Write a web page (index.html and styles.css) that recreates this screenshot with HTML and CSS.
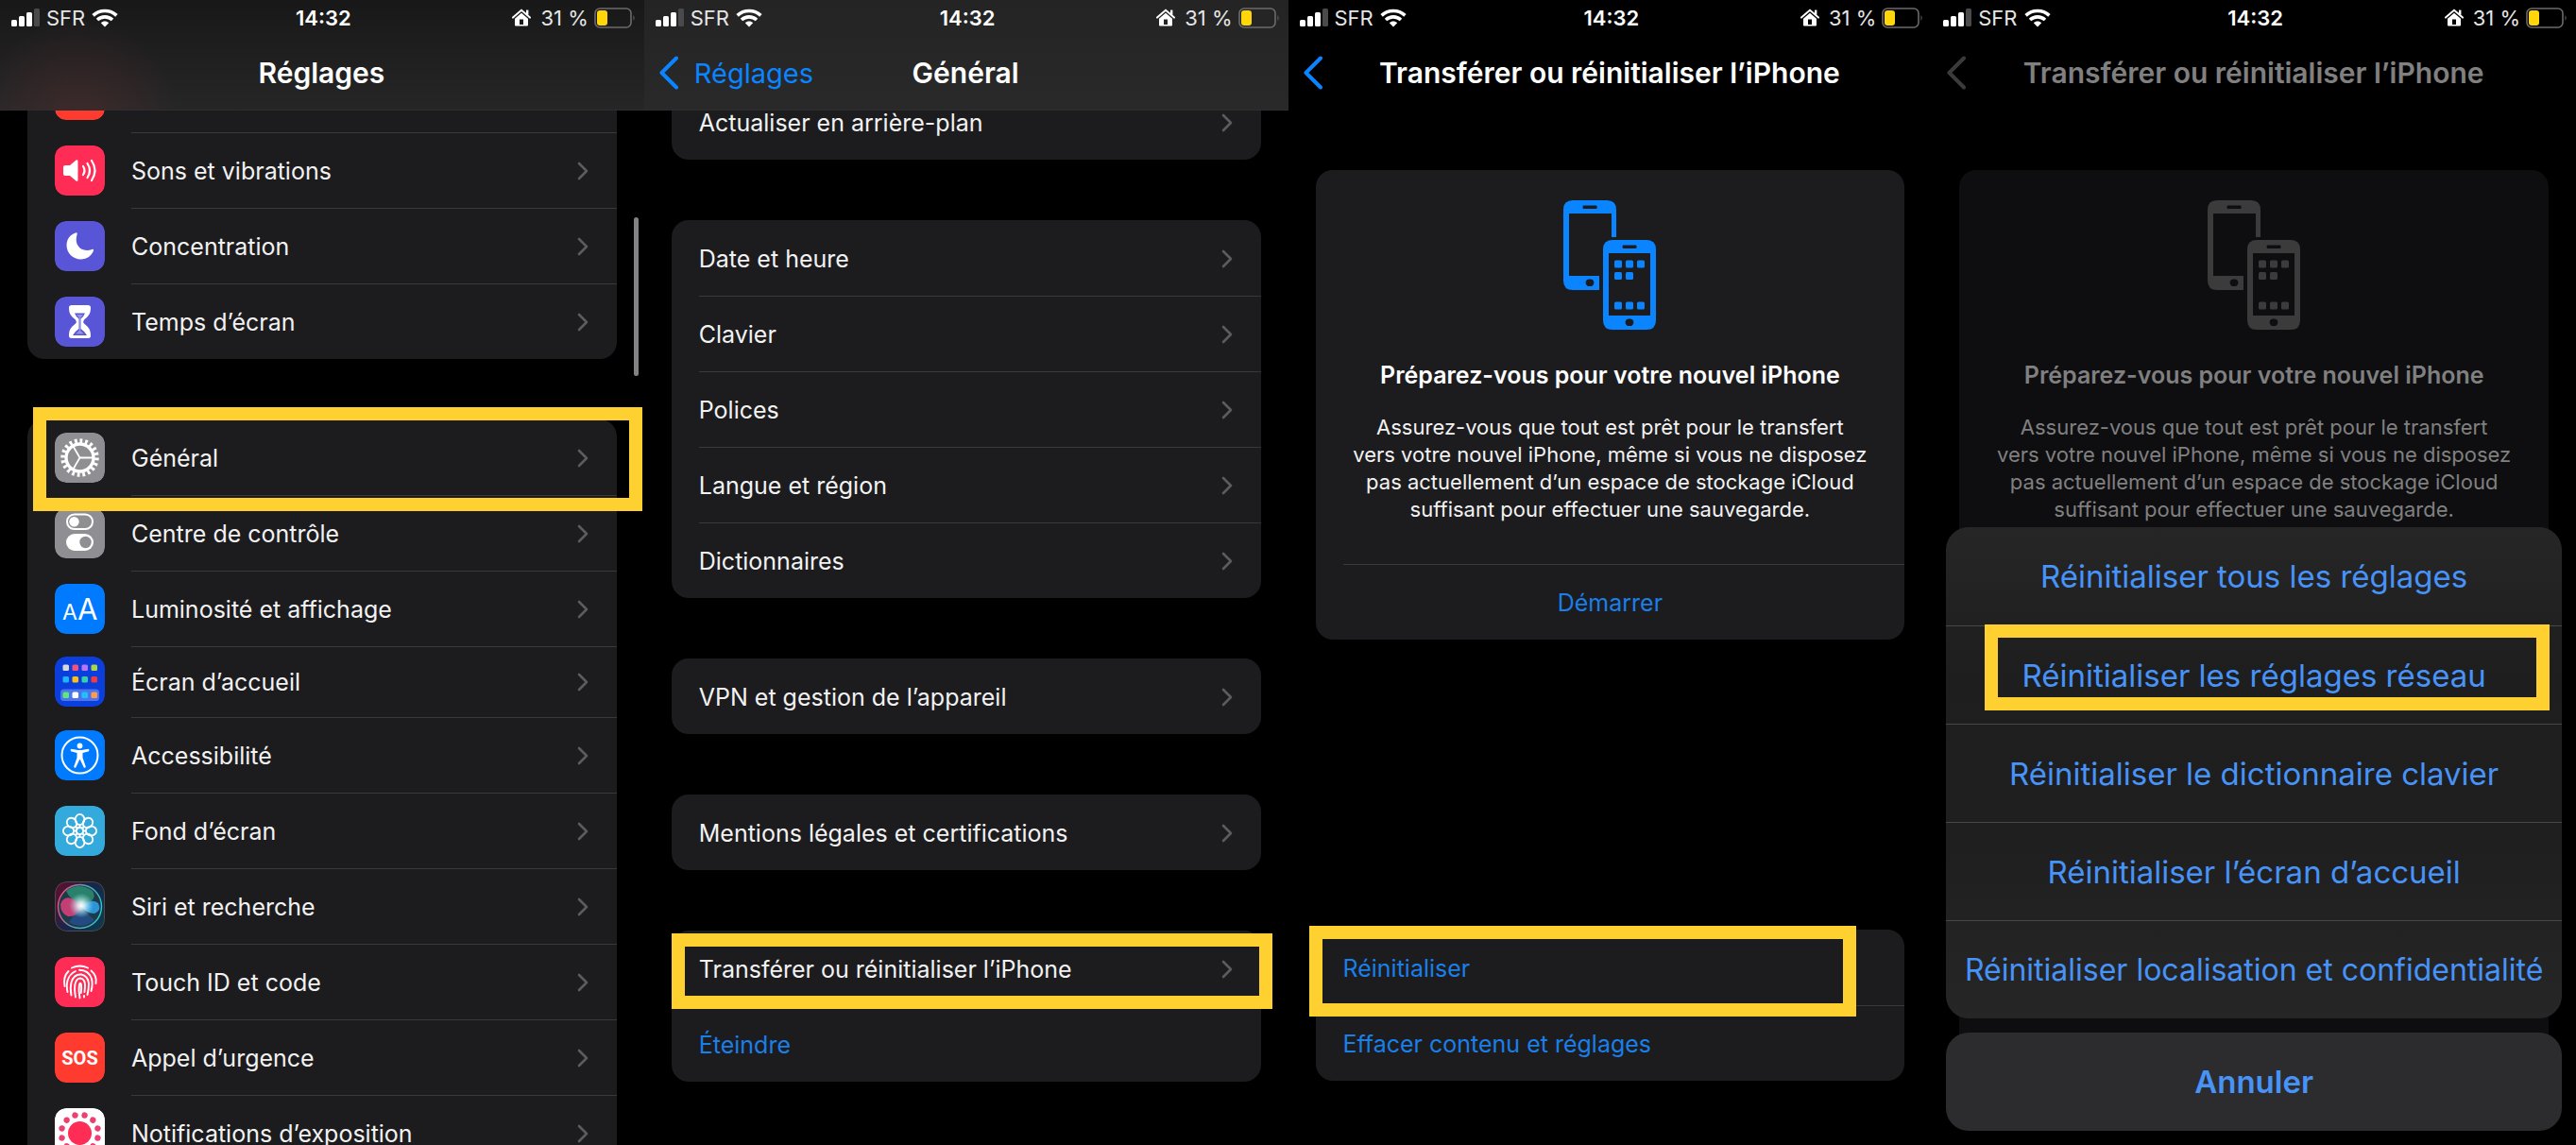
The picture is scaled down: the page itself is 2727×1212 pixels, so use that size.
FILE: index.html
```html
<!DOCTYPE html>
<html lang="fr">
<head>
    <meta charset="UTF-8">
    <meta name="viewport" content="width=device-width, initial-scale=1.0">
    <title>Réglages</title>
    <link rel="stylesheet" href="styles.css">
</head>
<body>
    <!-- shared icons -->
    <svg class="defs" width="0" height="0" aria-hidden="true">
        <symbol id="signal" viewBox="0 0 30 20">
            <g fill="#fff">
                <rect x="0" y="12" width="6" height="7" rx="1.5"/>
                <rect x="8" y="8" width="6" height="11" rx="1.5"/>
                <rect x="16" y="4" width="6" height="15" rx="1.5"/>
            </g>
            <rect x="24" y="0" width="6" height="19" rx="1.5" fill="#4a4a4c"/>
        </symbol>
        <symbol id="wifi" viewBox="0 0 28 20">
            <g fill="none" stroke="#fff" stroke-width="3.6">
                <path d="M1.6 7.4C8.6 .8 19.4 .8 26.4 7.4"/>
                <path d="M6 12C10.6 7.8 17.4 7.8 22 12"/>
            </g>
            <path d="M9.8 15.2C12.2 13 15.8 13 18.2 15.2L14 19.6Z" fill="#fff"/>
        </symbol>
        <symbol id="home" viewBox="0 0 20 19">
            <path d="M1 9.6L10 1.8L19 9.6" fill="none" stroke="#fff" stroke-width="2" stroke-linecap="round"/>
            <path d="M15 1.6h2.4v5h-2.4z" fill="#fff"/>
            <path d="M10 4.8L17 10.8V17.6Q17 18.6 16 18.6H4Q3 18.6 3 17.6V10.8ZM8 11.6V17H12V11.6Z" fill="#fff" fill-rule="evenodd"/>
        </symbol>
        <symbol id="battery" viewBox="0 0 44 22">
            <rect x="1" y="1" width="38" height="20" rx="5" fill="none" stroke="#6b6b6d" stroke-width="1.6"/>
            <path d="M41.5 8Q43.6 11 41.5 14Z" fill="#6b6b6d"/>
            <rect x="3" y="3" width="11" height="16" rx="3" fill="#ffd60a"/>
        </symbol>
        <symbol id="chevron" viewBox="0 0 12 20">
            <path d="M2 2L10 10L2 18" fill="none" stroke="#5b5b60" stroke-width="2.6" stroke-linecap="round" stroke-linejoin="round"/>
        </symbol>
        <symbol id="back" viewBox="0 0 22 36">
            <path d="M19 2.5L3.5 18L19 33.5" fill="none" stroke="currentColor" stroke-width="4" stroke-linecap="round" stroke-linejoin="round"/>
        </symbol>
        <symbol id="phones" viewBox="0 0 99 137">
            <g fill="currentColor" fill-rule="evenodd">
                <path d="M10 0H46Q56 0 56 10V39H51V14H6V80H38V95H10Q0 95 0 85V10Q0 0 10 0ZM21 5.5Q20 7.5 21 9H35Q36.5 7.5 35 5.5ZM28 83.5A3.8 3.8 0 1 0 28 91A3.8 3.8 0 1 0 28 83.5Z"/>
                <path d="M52 42H88Q98 42 98 52V127Q98 137 88 137H52Q42 137 42 127V52Q42 42 52 42ZM48 56V122H92V56ZM63 47.5Q62 49 63 51H77Q78.5 49 77 47.5ZM70 125.5A3.8 3.8 0 1 0 70 133A3.8 3.8 0 1 0 70 125.5Z"/>
                <rect x="54" y="63.5" width="8" height="8" rx="1.5"/>
                <rect x="66" y="63.5" width="8" height="8" rx="1.5"/>
                <rect x="78" y="63.5" width="8" height="8" rx="1.5"/>
                <rect x="54" y="76" width="8" height="8" rx="1.5"/>
                <rect x="66" y="76" width="8" height="8" rx="1.5"/>
                <rect x="54" y="107.5" width="8" height="8" rx="1.5"/>
                <rect x="66" y="107.5" width="8" height="8" rx="1.5"/>
                <rect x="78" y="107.5" width="8" height="8" rx="1.5"/>
            </g>
        </symbol>
    </svg>

    <main class="screens">

        <!-- 1. Réglages -->
        <section class="screen">
            <header class="bar bar-glow">
                <div class="status">
                    <div class="status-left"><svg class="i-signal"><use href="#signal"/></svg>SFR<svg class="i-wifi"><use href="#wifi"/></svg></div>
                    <time class="clock">14:32</time>
                    <div class="status-right"><svg class="i-home"><use href="#home"/></svg>31 %<svg class="i-battery"><use href="#battery"/></svg></div>
                </div>
                <div class="nav"><h1>Réglages</h1></div>
            </header>
            <div class="scroll from-icons">
                <nav class="card">
                    <a class="row" href="#notifications" aria-label="Notifications">
                        <svg class="icon" viewBox="0 0 53 53"><rect width="53" height="53" rx="12" fill="#ff3b30"/></svg>
                        <span class="body"></span>
                    </a>
                    <a class="row" href="#sons">
                        <svg class="icon" viewBox="0 0 53 53">
                            <rect width="53" height="53" rx="12" fill="#ff2d55"/>
                            <path d="M9 23Q9 21 11 21H16L22.5 15.5Q24.5 14.5 24.5 16.5V36.5Q24.5 38.5 22.5 37.5L16 32H11Q9 32 9 30Z" fill="#fff"/>
                            <g fill="none" stroke="#fff" stroke-width="2.2" stroke-linecap="round">
                                <path d="M30 22Q33 26.5 30 31"/><path d="M34.5 19Q39.5 26.5 34.5 34"/><path d="M39 16Q46 26.5 39 37"/>
                            </g>
                        </svg>
                        <span class="body">Sons et vibrations<svg class="chevron"><use href="#chevron"/></svg></span>
                    </a>
                    <a class="row" href="#concentration">
                        <svg class="icon" viewBox="0 0 53 53">
                            <rect width="53" height="53" rx="12" fill="#5856d6"/>
                            <path d="M22 12.5C15 15 12.5 20.5 12.5 25.5C12.5 34 19.5 40.5 27.5 40.5C34 40.5 39 36.5 41 31.2C41.4 29.9 40.4 29.5 39.4 30C30.5 33.5 19.5 27.5 23.6 14C24 12.7 23.3 12 22 12.5Z" fill="#fff"/>
                        </svg>
                        <span class="body">Concentration<svg class="chevron"><use href="#chevron"/></svg></span>
                    </a>
                    <a class="row" href="#temps">
                        <svg class="icon" viewBox="0 0 53 53">
                            <rect width="53" height="53" rx="12" fill="#5856d6"/>
                            <path d="M18 9H35Q38 9 38 11.5C38 18 36 20.5 31 24.5Q29.5 26.5 31 28.5C36 32.5 38 35 38 41.5Q38 44 35 44H18Q15 44 15 41.5C15 35 17 32.5 22 28.5Q23.5 26.5 22 24.5C17 20.5 15 18 15 11.5Q15 9 18 9Z" fill="#fff"/>
                            <path d="M21 17.5H32Q31 20.5 27.5 23.5V34Q32 37 34 41H19Q21 37 25.5 34V23.5Q22 20.5 21 17.5Z" fill="#5856d6"/>
                            <path d="M23 19H30L27.2 22.5V36L31 39.5H22L25.8 36V22.5Z" fill="#fff" opacity=".35"/>
                        </svg>
                        <span class="body">Temps d’écran<svg class="chevron"><use href="#chevron"/></svg></span>
                    </a>
                </nav>
                <nav class="card">
                    <a class="row" href="#general">
                        <svg class="icon" viewBox="0 0 53 53">
                            <rect width="53" height="53" rx="12" fill="#8e8e93"/>
                            <g fill="none" stroke="#fff">
                                <circle cx="26.5" cy="26.5" r="18" stroke-width="4.5" pathLength="40" stroke-dasharray="1 1"/>
                                <circle cx="26.5" cy="26.5" r="14.5" stroke-width="3.4"/>
                                <path d="M26.5 26.5H40M26.5 26.5L19.5 14.5M26.5 26.5L19.5 38.5" stroke-width="1.8"/>
                            </g>
                        </svg>
                        <span class="body">Général<svg class="chevron"><use href="#chevron"/></svg></span>
                        <span class="highlight hl-general"></span>
                    </a>
                    <a class="row" href="#controle">
                        <svg class="icon" viewBox="0 0 53 53">
                            <rect width="53" height="53" rx="12" fill="#8e8e93"/>
                            <rect x="13" y="6.5" width="27" height="15.5" rx="7.7" fill="none" stroke="#fff" stroke-width="2"/>
                            <circle cx="20.5" cy="14.3" r="5.2" fill="#fff"/>
                            <rect x="12" y="27" width="29" height="18" rx="9" fill="#fff"/>
                            <circle cx="32.5" cy="36" r="6.2" fill="#8e8e93"/>
                        </svg>
                        <span class="body">Centre de contrôle<svg class="chevron"><use href="#chevron"/></svg></span>
                    </a>
                    <a class="row" href="#luminosite">
                        <svg class="icon" viewBox="0 0 53 53">
                            <rect width="53" height="53" rx="12" fill="#007aff"/>
                            <text x="8" y="38" font-size="23" fill="#fff">A</text>
                            <text x="24" y="38" font-size="31" fill="#fff">A</text>
                        </svg>
                        <span class="body">Luminosité et affichage<svg class="chevron"><use href="#chevron"/></svg></span>
                    </a>
                    <a class="row row-short" href="#accueil">
                        <svg class="icon" viewBox="0 0 53 53">
                            <rect width="53" height="53" rx="12" fill="#0a3fdc"/>
                            <rect x="6" y="34.5" width="41" height="12.5" rx="3.5" fill="#4d74ec"/>
                            <rect x="8.5" y="8.5" width="6.5" height="6.5" rx="1.5" fill="#d8d8dc"/>
                            <rect x="18.5" y="8.5" width="6.5" height="6.5" rx="1.5" fill="#f5517a"/>
                            <rect x="28.5" y="8.5" width="6.5" height="6.5" rx="1.5" fill="#b874fa"/>
                            <rect x="38.5" y="8.5" width="6.5" height="6.5" rx="1.5" fill="#a8d648"/>
                            <rect x="8.5" y="21" width="6.5" height="6.5" rx="1.5" fill="#1fb4ff"/>
                            <rect x="18.5" y="21" width="6.5" height="6.5" rx="1.5" fill="#fcbf14"/>
                            <rect x="28.5" y="21" width="6.5" height="6.5" rx="1.5" fill="#36cfa8"/>
                            <rect x="38.5" y="21" width="6.5" height="6.5" rx="1.5" fill="#f23a3f"/>
                            <rect x="8.5" y="37.5" width="6.5" height="6.5" rx="1.5" fill="#5bea78"/>
                            <rect x="18.5" y="37.5" width="6.5" height="6.5" rx="1.5" fill="#fff"/>
                            <rect x="28.5" y="37.5" width="6.5" height="6.5" rx="1.5" fill="#1cc3fb"/>
                            <rect x="38.5" y="37.5" width="6.5" height="6.5" rx="1.5" fill="#ff9c4a"/>
                        </svg>
                        <span class="body">Écran d’accueil<svg class="chevron"><use href="#chevron"/></svg></span>
                    </a>
                    <a class="row" href="#accessibilite">
                        <svg class="icon" viewBox="0 0 53 53">
                            <rect width="53" height="53" rx="12" fill="#007aff"/>
                            <circle cx="26.5" cy="26.5" r="19" fill="none" stroke="#fff" stroke-width="2"/>
                            <circle cx="26.5" cy="16.5" r="2.9" fill="#fff"/>
                            <path d="M17.5 19.8L24.5 21H28.5L35.5 19.8Q37.2 20.7 36 22.2L29.5 24V29L32.8 38.5Q32.3 40.3 30.8 39.4L26.5 30.5L22.2 39.4Q20.7 40.3 20.2 38.5L23.5 29V24L17 22.2Q15.8 20.7 17.5 19.8Z" fill="#fff"/>
                        </svg>
                        <span class="body">Accessibilité<svg class="chevron"><use href="#chevron"/></svg></span>
                    </a>
                    <a class="row" href="#fond">
                        <svg class="icon" viewBox="0 0 53 53">
                            <rect width="53" height="53" rx="12" fill="#34aadc"/>
                            <g fill="none" stroke="#fff" stroke-width="1.8">
                                <g id="petals">
                                    <ellipse cx="26.5" cy="14.5" rx="4.9" ry="5.6"/>
                                    <ellipse cx="26.5" cy="38.5" rx="4.9" ry="5.6"/>
                                    <ellipse cx="14.5" cy="26.5" rx="5.6" ry="4.9"/>
                                    <ellipse cx="38.5" cy="26.5" rx="5.6" ry="4.9"/>
                                </g>
                                <use href="#petals" transform="rotate(45 26.5 26.5)"/>
                                <circle cx="26.5" cy="26.5" r="3.8"/>
                                <path d="M26.5 20V33M20 26.5H33M22 22L31 31M31 22L22 31"/>
                            </g>
                            <circle cx="26.5" cy="26.5" r="2.6" fill="#34aadc"/>
                        </svg>
                        <span class="body">Fond d’écran<svg class="chevron"><use href="#chevron"/></svg></span>
                    </a>
                    <a class="row" href="#siri">
                        <svg class="icon" viewBox="0 0 53 53">
                            <defs>
                                <linearGradient id="siri-bg" x1="0" y1=".2" x2="1" y2=".8">
                                    <stop offset="0" stop-color="#5a1030"/><stop offset=".5" stop-color="#15264a"/><stop offset="1" stop-color="#0c3a4c"/>
                                </linearGradient>
                                <linearGradient id="siri-ring" x1="0" y1=".3" x2="1" y2=".6">
                                    <stop offset="0" stop-color="#f0507c"/><stop offset=".5" stop-color="#5f9fb0"/><stop offset="1" stop-color="#35c8d8"/>
                                </linearGradient>
                                <radialGradient id="siri-light">
                                    <stop offset="0" stop-color="#fff"/><stop offset=".3" stop-color="#e8fbff" stop-opacity=".8"/><stop offset="1" stop-color="#8fe8e8" stop-opacity="0"/>
                                </radialGradient>
                            </defs>
                            <rect x=".5" y=".5" width="52" height="52" rx="12" fill="url(#siri-bg)" stroke="#4a4a50"/>
                            <circle cx="26.5" cy="26.5" r="23" fill="#1c3a48"/>
                            <path d="M12 10Q26 0 40 10Q46 20 30 25Q16 20 12 10Z" fill="#2d9a78" opacity=".75"/>
                            <path d="M6 24Q10 14 20 19L30 27Q24 38 14 37Q6 34 6 24Z" fill="#e0407c" opacity=".85"/>
                            <path d="M28 27Q38 17 46 23Q50 31 42 34Q34 34 28 27Z" fill="#2f9fe8" opacity=".9"/>
                            <path d="M15 43L27 27L42 41Q28 52 15 43Z" fill="#2a56a8" opacity=".6"/>
                            <circle cx="26.5" cy="26.5" r="23" fill="none" stroke="url(#siri-ring)" stroke-width="1.4"/>
                            <circle cx="28" cy="25.5" r="13" fill="url(#siri-light)"/>
                        </svg>
                        <span class="body">Siri et recherche<svg class="chevron"><use href="#chevron"/></svg></span>
                    </a>
                    <a class="row" href="#touchid">
                        <svg class="icon" viewBox="0 0 53 53">
                            <rect width="53" height="53" rx="12" fill="#ff2d55"/>
                            <g fill="none" stroke="#fff" stroke-width="1.9" stroke-linecap="round">
                                <path d="M18 11.5Q26.5 7.5 35 11.5"/>
                                <path d="M10.5 31Q8.5 21 14.5 15"/>
                                <path d="M38.5 14.5Q45 20 43.5 28"/>
                                <path d="M13.5 37Q12 30 13.5 25Q15.5 18 22 15"/>
                                <path d="M26 13.8Q36 14 39 23Q40.5 29 38.5 36"/>
                                <path d="M17.5 40.5Q16 33 17.5 27Q20 18 28 18.5Q35 20 36 28Q36 34 34.5 40"/>
                                <path d="M22 42.5Q20.5 34 21.5 28.5Q23 22.5 27 22.5Q31.5 23 32 29Q32 33 31.5 37"/>
                                <path d="M26.5 43.5Q25 35 26 29Q27 26.5 28 29Q28.5 33 27.8 38"/>
                                <path d="M31 41V42.5"/>
                            </g>
                        </svg>
                        <span class="body">Touch ID et code<svg class="chevron"><use href="#chevron"/></svg></span>
                    </a>
                    <a class="row" href="#urgence">
                        <svg class="icon" viewBox="0 0 53 53">
                            <rect width="53" height="53" rx="12" fill="#ff3b30"/>
                            <text class="sos" x="26.5" y="34" text-anchor="middle" fill="#fff">SOS</text>
                        </svg>
                        <span class="body">Appel d’urgence<svg class="chevron"><use href="#chevron"/></svg></span>
                    </a>
                    <a class="row" href="#exposition">
                        <svg class="icon" viewBox="0 0 53 53">
                            <rect width="53" height="53" rx="12" fill="#fff"/>
                            <circle cx="26.5" cy="26.5" r="12.5" fill="#ff2d55"/>
                            <circle cx="26.5" cy="26.5" r="19.6" fill="none" stroke="#ee3f72" stroke-width="6.4" stroke-linecap="round" pathLength="12" stroke-dasharray="0 1" transform="rotate(15 26.5 26.5)"/>
                        </svg>
                        <span class="body">Notifications d’exposition<svg class="chevron"><use href="#chevron"/></svg></span>
                    </a>
                </nav>
            </div>
            <div class="scrollbar"></div>
        </section>

        <!-- 2. Général -->
        <section class="screen">
            <header class="bar bar-grey">
                <div class="status">
                    <div class="status-left"><svg class="i-signal"><use href="#signal"/></svg>SFR<svg class="i-wifi"><use href="#wifi"/></svg></div>
                    <time class="clock">14:32</time>
                    <div class="status-right"><svg class="i-home"><use href="#home"/></svg>31 %<svg class="i-battery"><use href="#battery"/></svg></div>
                </div>
                <div class="nav">
                    <a class="back" href="#reglages"><svg class="i-back"><use href="#back"/></svg>Réglages</a>
                    <h1>Général</h1>
                </div>
            </header>
            <div class="scroll from-text">
                <nav class="card">
                    <a class="row" href="#arriere-plan"><span class="body">Actualiser en arrière-plan<svg class="chevron"><use href="#chevron"/></svg></span></a>
                </nav>
                <nav class="card">
                    <a class="row" href="#date"><span class="body">Date et heure<svg class="chevron"><use href="#chevron"/></svg></span></a>
                    <a class="row" href="#clavier"><span class="body">Clavier<svg class="chevron"><use href="#chevron"/></svg></span></a>
                    <a class="row" href="#polices"><span class="body">Polices<svg class="chevron"><use href="#chevron"/></svg></span></a>
                    <a class="row" href="#langue"><span class="body">Langue et région<svg class="chevron"><use href="#chevron"/></svg></span></a>
                    <a class="row" href="#dictionnaires"><span class="body">Dictionnaires<svg class="chevron"><use href="#chevron"/></svg></span></a>
                </nav>
                <nav class="card">
                    <a class="row" href="#vpn"><span class="body">VPN et gestion de l’appareil<svg class="chevron"><use href="#chevron"/></svg></span></a>
                </nav>
                <nav class="card">
                    <a class="row" href="#mentions"><span class="body">Mentions légales et certifications<svg class="chevron"><use href="#chevron"/></svg></span></a>
                </nav>
                <nav class="card">
                    <a class="row" href="#transferer">
                        <span class="body">Transférer ou réinitialiser l’iPhone<svg class="chevron"><use href="#chevron"/></svg></span>
                        <span class="highlight hl-transfer"></span>
                    </a>
                    <button class="row link" type="button"><span class="body">Éteindre</span></button>
                </nav>
            </div>
        </section>

        <!-- 3. Transférer ou réinitialiser -->
        <section class="screen">
            <header class="bar">
                <div class="status">
                    <div class="status-left"><svg class="i-signal"><use href="#signal"/></svg>SFR<svg class="i-wifi"><use href="#wifi"/></svg></div>
                    <time class="clock">14:32</time>
                    <div class="status-right"><svg class="i-home"><use href="#home"/></svg>31 %<svg class="i-battery"><use href="#battery"/></svg></div>
                </div>
                <div class="nav">
                    <a class="back" href="#general" aria-label="Général"><svg class="i-back"><use href="#back"/></svg></a>
                    <h1>Transférer ou réinitialiser l’iPhone</h1>
                </div>
            </header>
            <div class="scroll split">
                <div class="card intro">
                    <svg class="phones"><use href="#phones"/></svg>
                    <h2>Préparez-vous pour votre nouvel iPhone</h2>
                    <p>Assurez-vous que tout est prêt pour le transfert<br>vers votre nouvel iPhone, même si vous ne disposez<br>pas actuellement d’un espace de stockage iCloud<br>suffisant pour effectuer une sauvegarde.</p>
                    <button class="row link start" type="button"><span class="body">Démarrer</span></button>
                </div>
                <div class="card">
                    <button class="row link" type="button">
                        <span class="body">Réinitialiser</span>
                        <span class="highlight hl-reset"></span>
                    </button>
                    <button class="row link" type="button"><span class="body">Effacer contenu et réglages</span></button>
                </div>
            </div>
        </section>

        <!-- 4. Feuille d'actions -->
        <section class="screen dimmed">
            <header class="bar">
                <div class="status">
                    <div class="status-left"><svg class="i-signal"><use href="#signal"/></svg>SFR<svg class="i-wifi"><use href="#wifi"/></svg></div>
                    <time class="clock">14:32</time>
                    <div class="status-right"><svg class="i-home"><use href="#home"/></svg>31 %<svg class="i-battery"><use href="#battery"/></svg></div>
                </div>
                <div class="nav">
                    <a class="back" href="#general" aria-label="Général"><svg class="i-back"><use href="#back"/></svg></a>
                    <h1>Transférer ou réinitialiser l’iPhone</h1>
                </div>
            </header>
            <div class="scroll split">
                <div class="card intro">
                    <svg class="phones"><use href="#phones"/></svg>
                    <h2>Préparez-vous pour votre nouvel iPhone</h2>
                    <p>Assurez-vous que tout est prêt pour le transfert<br>vers votre nouvel iPhone, même si vous ne disposez<br>pas actuellement d’un espace de stockage iCloud<br>suffisant pour effectuer une sauvegarde.</p>
                    <div class="row"></div>
                </div>
                <div class="card">
                    <div class="row"></div>
                    <div class="row"></div>
                </div>
            </div>
            <div class="sheet" role="dialog" aria-label="Réinitialiser">
                <div class="actions">
                    <button class="action" type="button">Réinitialiser tous les réglages</button>
                    <button class="action" type="button">Réinitialiser les réglages réseau<span class="highlight hl-network"></span></button>
                    <button class="action" type="button">Réinitialiser le dictionnaire clavier</button>
                    <button class="action" type="button">Réinitialiser l’écran d’accueil</button>
                    <button class="action action-long" type="button">Réinitialiser localisation et confidentialité</button>
                </div>
                <button class="action cancel" type="button">Annuler</button>
            </div>
        </section>
    </main>
</body>
</html>
```
FILE: styles.css
```css
* {
    box-sizing: border-box;
}
body {
    margin: 0;
    background: #000;
    color: #f2f2f3;
    font-family: Inter, "Liberation Sans", sans-serif;
    font-size: 25px;
}
h1, h2, p {
    margin: 0;
}
a {
    color: inherit;
    text-decoration: none;
}
button {
    border: none;
    background: none;
    padding: 0;
    font: inherit;
    color: inherit;
    text-align: left;
    cursor: pointer;
}
svg {
    display: block;
    flex: none;
}
.defs {
    position: absolute;
}
.screens {
    display: grid;
    grid-template-columns: repeat(4, minmax(0, 1fr));
    height: 100vh;
}
.screen {
    position: relative;
    display: flex;
    flex-direction: column;
    min-height: 0;
    overflow: hidden;
}

/* header */
.bar {
    position: relative;
    z-index: 1;
    flex: none;
    height: 117px;
}
.bar-glow {
    background:
        radial-gradient(circle at 12% 110%, rgba(100, 50, 50, 0.4), transparent 110px),
        linear-gradient(#181819, #262627);
    border-bottom: 1px solid #2e2e30;
}
.bar-grey {
    background: linear-gradient(#242425, #29292a);
    border-bottom: 1px solid #2e2e30;
}
.status {
    display: grid;
    grid-template-columns: 1fr auto 1fr;
    align-items: center;
    height: 37px;
    padding: 0 9px 0 12px;
    font-size: 22px;
    color: #e6e6e6;
}
.status-left,
.status-right {
    display: flex;
    align-items: center;
    gap: 7px;
}
.status-right {
    justify-content: flex-end;
    gap: 6px;
}
.clock {
    font-weight: 600;
    color: #fff;
}
.i-signal { width: 30px; height: 20px; }
.i-wifi { width: 28px; height: 20px; }
.i-home { width: 20px; height: 19px; margin-right: 4px; }
.i-battery { width: 44px; height: 22px; }
.nav {
    display: grid;
    grid-template-columns: 1fr auto 1fr;
    align-items: center;
    height: 80px;
    padding: 0 16px 0 15px;
}
.nav h1 {
    grid-column: 2;
    font-size: 30px;
    font-weight: 600;
    color: #fff;
}
.back {
    display: flex;
    align-items: center;
    gap: 16px;
    font-size: 29px;
    color: #0a84ff;
}
.i-back { width: 22px; height: 36px; }

/* grouped lists */
.scroll {
    flex: 1;
    display: flex;
    flex-direction: column;
    gap: 64px;
    min-height: 0;
    padding: 0 29px;
}
.from-icons { margin-top: -57px; }
.from-text { margin-top: -28px; }
.split {
    justify-content: space-between;
    padding-top: 63px;
    padding-bottom: 68px;
}
.card {
    flex: none;
    border-radius: 18px;
    background: #1c1c1e;
}
.row {
    position: relative;
    display: flex;
    align-items: center;
    gap: 28px;
    width: 100%;
    height: 80px;
    padding-left: 29px;
}
.row-short {
    height: 75px;
}
.icon {
    width: 53px;
    height: 53px;
    border-radius: 12px;
}
.sos {
    font: 700 20px Roboto, sans-serif;
}
.body {
    flex: 1;
    align-self: stretch;
    display: flex;
    align-items: center;
    justify-content: space-between;
    padding-right: 30px;
    border-top: 1px solid #39393b;
}
.row:first-child .body {
    border-top-color: transparent;
}
.chevron {
    width: 12px;
    height: 20px;
}
.link {
    color: #1a7fe8;
}
.scrollbar {
    position: absolute;
    top: 230px;
    right: 6px;
    width: 5px;
    height: 168px;
    border-radius: 3px;
    background: #828284;
}

/* intro card */
.intro {
    display: flex;
    flex-direction: column;
    align-items: center;
    padding-top: 32px;
    text-align: center;
}
.phones {
    width: 99px;
    height: 137px;
    color: #0a84ff;
}
.intro h2 {
    margin-top: 32px;
    font-size: 25px;
    line-height: 32px;
    font-weight: 600;
    color: #fff;
}
.intro p {
    margin: 25px 0 43px;
    font-size: 22px;
    line-height: 29px;
}
.start .body {
    justify-content: center;
    padding-right: 29px;
}
.start.row .body {
    border-top-color: #39393b;
}

/* action sheet */
.dimmed h1,
.dimmed h2,
.dimmed p {
    color: #808081;
}
.dimmed .back,
.dimmed .phones {
    color: #3b3b3c;
}
.dimmed .card {
    background: #0e0e10;
}
.sheet {
    position: absolute;
    left: 15px;
    right: 15px;
    bottom: 15px;
    display: flex;
    flex-direction: column;
    gap: 15px;
}
.actions {
    border-radius: 24px;
    background: linear-gradient(#262627, #1e1e1f 30%, #1f1f20 65%, #262627);
}
.action {
    position: relative;
    display: block;
    width: 100%;
    height: 104px;
    font-size: 33px;
    text-align: center;
    white-space: nowrap;
    color: #4793f8;
}
.action + .action {
    border-top: 1px solid #48484a;
}
.action-long {
    font-size: 32px;
}
.cancel {
    border-radius: 24px;
    background: #2c2c2e;
    font-weight: 600;
}

/* yellow frames */
.highlight {
    position: absolute;
    z-index: 2;
    border: 14px solid #ffd130;
    pointer-events: none;
}
.hl-general { inset: -13px -27px -17px 6px; }
.hl-transfer { inset: 3px -12px -3px 0; }
.hl-reset { inset: -4px 51px -12px -7px; }
.hl-network { inset: -2px 13px 14px 41px; }
```
